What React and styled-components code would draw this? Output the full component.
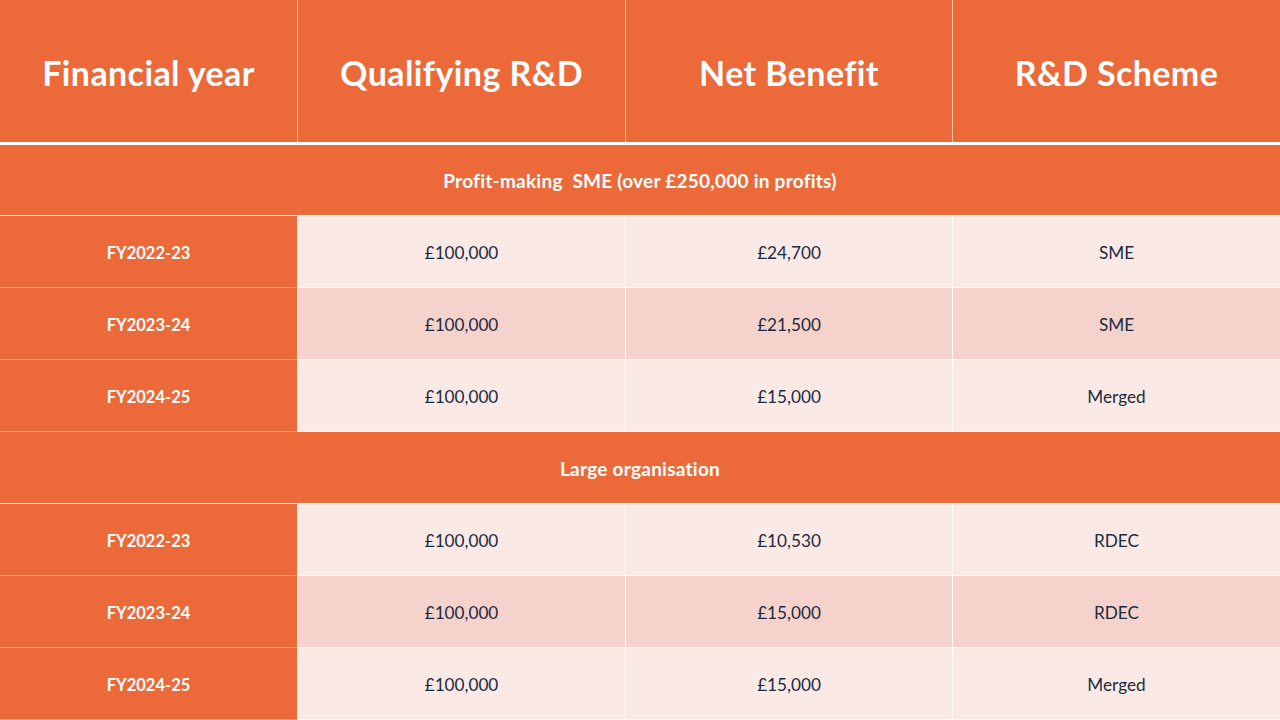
import React from "react";
import styled, { createGlobalStyle } from "styled-components";

const GlobalStyle = createGlobalStyle`
    html, body {
        margin: 0;
        padding: 0;
        background: #ffffff;
    }
    body {
        font-family: "Lato", "Open Sans", sans-serif;
    }
`;

const Table = styled.div`
    width: 1280px;
    height: 720px;
    display: flex;
    flex-direction: column;
    background: #ffffff;
    overflow: hidden;
`;

const Row = styled.div`
    display: grid;
    grid-template-columns: 297px 328px 327px 328px;
    box-sizing: border-box;
    height: ${props => props.height}px;
    border-bottom: ${props => props.line}px solid #ffffff;
`;

const HeadCell = styled.div`
    display: flex;
    align-items: center;
    justify-content: center;
    padding-top: 2px;
    background: #ec6a3a;
    color: #ffffff;
    font-size: 34px;
    font-weight: 700;
    letter-spacing: 0.4px;
    border-left: ${props => (props.first ? "none" : "1px solid #f6c2ad")};
`;

const Section = styled.div`
    grid-column: 1 / -1;
    display: flex;
    align-items: center;
    justify-content: center;
    padding-top: 1px;
    background: #ec6a3a;
    color: #ffffff;
    font-size: 19px;
    font-weight: 700;
    letter-spacing: 0.25px;
    white-space: pre;
`;

const YearCell = styled.div`
    display: flex;
    align-items: center;
    justify-content: center;
    padding-top: 2px;
    background: #ec6a3a;
    color: #ffffff;
    font-size: 16.5px;
    font-weight: 700;
    box-shadow: 0 1px 0 #f4a584;
    position: relative;
    z-index: 1;
`;

const DataCell = styled.div`
    display: flex;
    align-items: center;
    justify-content: center;
    padding-top: 2px;
    background: ${props => (props.shade ? "#f5d3cc" : "#fae9e5")};
    color: #1b2b40;
    font-size: 17.2px;
    border-left: 1px solid #ffffff;
`;

const groups = [
    {
        title: "Profit-making  SME (over £250,000 in profits)",
        height: 71,
        rows: [
            ["FY2022-23", "£100,000", "£24,700", "SME"],
            ["FY2023-24", "£100,000", "£21,500", "SME"],
            ["FY2024-25", "£100,000", "£15,000", "Merged"]
        ]
    },
    {
        title: "Large organisation",
        height: 72,
        rows: [
            ["FY2022-23", "£100,000", "£10,530", "RDEC"],
            ["FY2023-24", "£100,000", "£15,000", "RDEC"],
            ["FY2024-25", "£100,000", "£15,000", "Merged"]
        ]
    }
];

const headings = ["Financial year", "Qualifying R&D", "Net Benefit", "R&D Scheme"];

export default () => {
    return (
        <>
            <GlobalStyle />
            <Table>
                <Row height={145} line={3}>
                    {headings.map((h, i) => (
                        <HeadCell key={h} first={i === 0}>{h}</HeadCell>
                    ))}
                </Row>
                {groups.map(group => (
                    <React.Fragment key={group.title}>
                        <Row height={group.height} line={1}>
                            <Section>{group.title}</Section>
                        </Row>
                        {group.rows.map((r, i) => (
                            <Row key={r[0]} height={72} line={1}>
                                <YearCell>{r[0]}</YearCell>
                                <DataCell shade={i === 1}>{r[1]}</DataCell>
                                <DataCell shade={i === 1}>{r[2]}</DataCell>
                                <DataCell shade={i === 1}>{r[3]}</DataCell>
                            </Row>
                        ))}
                    </React.Fragment>
                ))}
            </Table>
        </>
    );
};
